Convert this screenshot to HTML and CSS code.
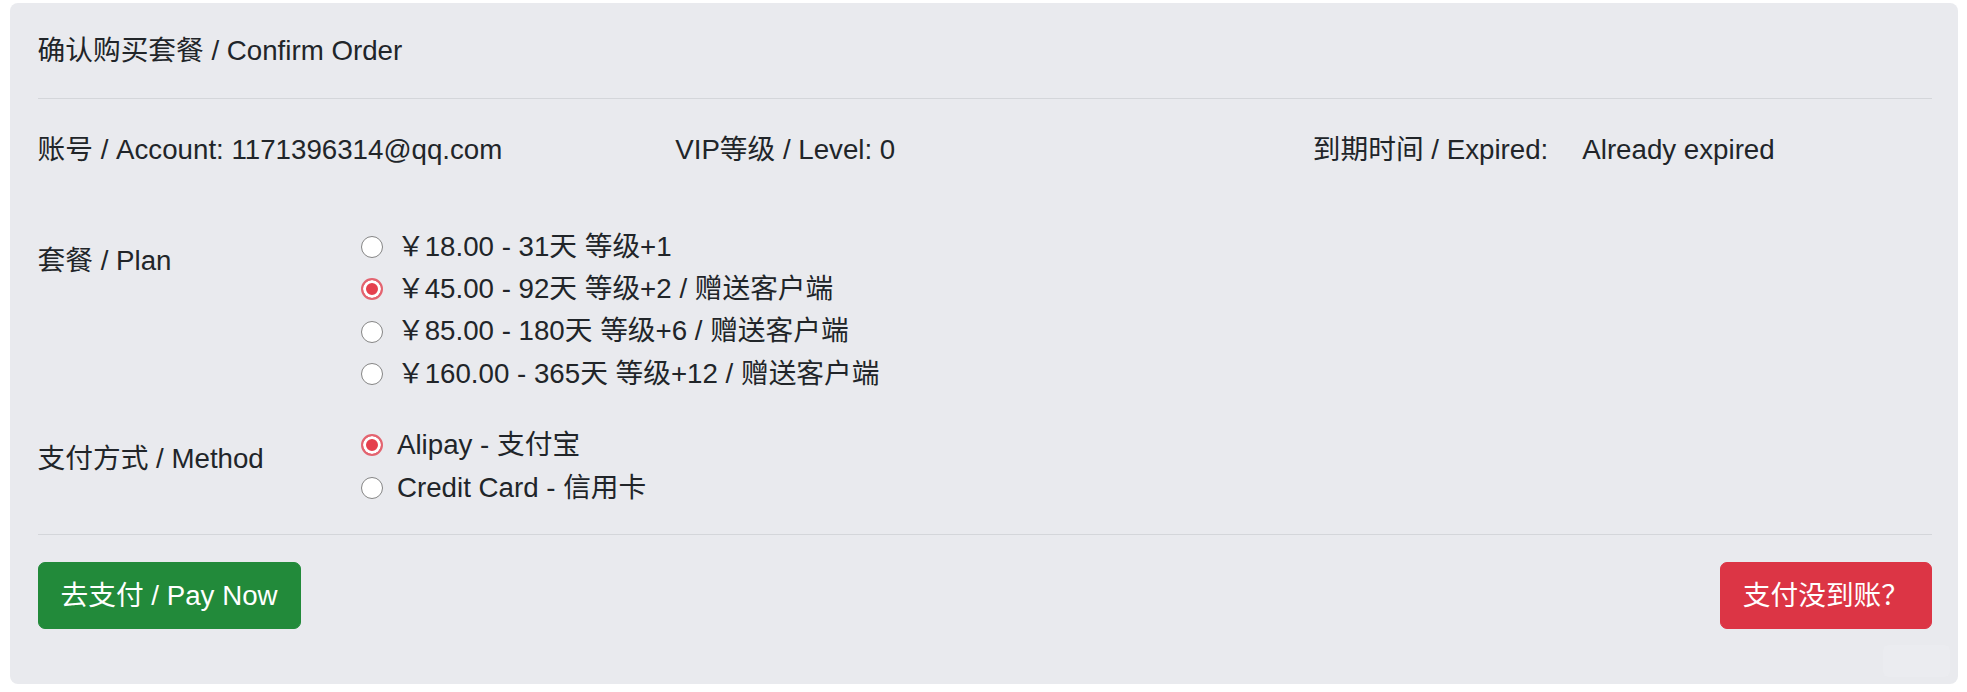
FILE: index.html
```html
<!DOCTYPE html>
<html>

	<head>
		<meta charset="UTF-8">
		<title>确认购买套餐</title>
		<link rel="stylesheet" href="styles.css">
	</head>

	<body>
		<div class="card">
			<div class="card-header">确认购买套餐 / Confirm Order</div>

			<div class="info">
				<div class="info-col">账号 / Account: 1171396314@qq.com</div>
				<div class="info-col">VIP等级 / Level: 0</div>
				<div class="info-col info-expire">
					<span>到期时间 / Expired:</span>
					<span>Already expired</span>
				</div>
			</div>

			<form class="order-form">
				<div class="form-row">
					<div class="form-label">套餐 / Plan</div>
					<div class="options">
						<label class="option"><input type="radio" name="plan" value="1">￥18.00 - 31天 等级+1</label>
						<label class="option"><input type="radio" name="plan" value="2" checked>￥45.00 - 92天 等级+2 / 赠送客户端</label>
						<label class="option"><input type="radio" name="plan" value="3">￥85.00 - 180天 等级+6 / 赠送客户端</label>
						<label class="option"><input type="radio" name="plan" value="4">￥160.00 - 365天 等级+12 / 赠送客户端</label>
					</div>
				</div>
				<div class="form-row">
					<div class="form-label">支付方式 / Method</div>
					<div class="options">
						<label class="option"><input type="radio" name="method" value="alipay" checked>Alipay - 支付宝</label>
						<label class="option"><input type="radio" name="method" value="card">Credit Card - 信用卡</label>
					</div>
				</div>
			</form>

			<div class="actions">
				<button type="button" class="btn btn-success">去支付 / Pay Now</button>
				<button type="button" class="btn btn-danger">支付没到账？</button>
			</div>

			<div class="corner-tab"></div>
		</div>
	</body>

</html>
```

FILE: styles.css
```css
html,
body {
	margin: 0;
	padding: 0;
}

body {
	background-color: #fff;
	padding: 3px 9px 0 10px;
	font-family: "Liberation Sans", "Noto Sans CJK SC", sans-serif;
	font-size: 27.7px;
	line-height: 1.5;
	color: #212529;
}

.card {
	position: relative;
	background-color: #e9eaee;
	border-radius: 8px;
	padding: 27px 26px 55px 27.6px;
}

.card-header {
	padding-bottom: 26px;
	border-bottom: 1px solid #d4d6da;
}

.info {
	display: grid;
	grid-template-columns: repeat(3, 1fr);
	column-gap: 18.5px;
	margin-top: 30px;
}

.info-expire {
	display: flex;
	gap: 34px;
}

.order-form {
	margin-top: 55.5px;
	padding-bottom: 24.5px;
	border-bottom: 1px solid #d4d6da;
}

.form-row {
	display: grid;
	grid-template-columns: 323.4px 1fr;
}

.form-row + .form-row {
	margin-top: 29px;
}

.form-label {
	padding-top: 14px;
}

.options {
	display: flex;
	flex-direction: column;
}

.option {
	display: flex;
	align-items: center;
	line-height: 42.4px;
	cursor: pointer;
}

.option input {
	-webkit-appearance: none;
	appearance: none;
	width: 22px;
	height: 22px;
	margin: 0 14px 0 0;
	border: 1.5px solid #858585;
	border-radius: 50%;
	background-color: #fff;
	box-sizing: border-box;
	flex-shrink: 0;
}

.option input:checked {
	border: 2px solid #e36470;
	background-color: #e5404e;
	box-shadow: inset 0 0 0 3px #fff;
}

.actions {
	display: flex;
	justify-content: space-between;
	margin-top: 27.5px;
}

.btn {
	font-family: inherit;
	font-size: 27.7px;
	line-height: 1.5;
	padding: 11.5px 22px;
	border: 1px solid transparent;
	border-radius: 7px;
	color: #fff;
	cursor: pointer;
}

.btn-success {
	background-color: #228a3a;
	border-color: #228a3a;
}

.btn-danger {
	background-color: #dc3545;
	border-color: #dc3545;
}

.corner-tab {
	position: absolute;
	right: 8px;
	bottom: 7px;
	width: 67px;
	height: 32px;
	border-radius: 6px;
	background-color: rgba(255, 255, 255, .12);
}
```
